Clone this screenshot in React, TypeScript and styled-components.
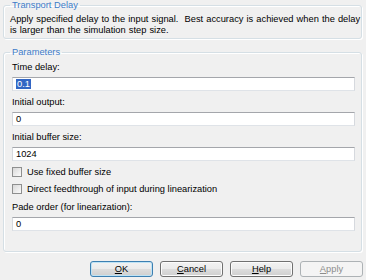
import styled, { createGlobalStyle } from 'styled-components'

const GlobalStyle = createGlobalStyle`
  html, body {
    margin: 0;
    padding: 0;
    background: #f0f0f0;
  }
  body {
    font-family: "Liberation Sans", Arial, sans-serif;
    font-size: 9.3px;
    color: #000;
  }
`

const Dialog = styled.div`
  width: 366px;
  height: 280px;
  display: flex;
  flex-direction: column;
  background: #f0f0f0;
`

const Group = styled.fieldset<{ $top: number; $padBottom: number }>`
  margin: ${(p) => p.$top}px 4px 0 3px;
  padding: 4px 6px ${(p) => p.$padBottom}px 8px;
  border: 1px solid #d5dfe5;
  border-radius: 3px;
  box-shadow: inset 1px 1px 0 #fff, 1px 1px 0 #fff;
  min-width: 0;
`

const Legend = styled.legend`
  padding: 0 2px;
  margin-left: -2px;
  line-height: 10px;
  color: #3d7cc9;
`

const Description = styled.div`
  margin-left: -2px;
  line-height: 11px;
  word-spacing: 0.5px;
  white-space: pre;
`

const Fields = styled.div`
  display: flex;
  flex-direction: column;
  gap: 5px;
`

const Field = styled.div`
  display: flex;
  flex-direction: column;
  gap: 4px;
`

const Label = styled.div`
  height: 12px;
  line-height: 12px;
`

const TextBox = styled.div`
  height: 14px;
  box-sizing: border-box;
  border: 1px solid;
  border-color: #a4a6ab #d6d9de #dfe3e8 #d6d9de;
  background: #fff;
  padding-left: 3px;
  line-height: 12px;
`

const Selected = styled.span`
  background: #3266c4;
  color: #fff;
  padding: 0 1px;
`

const Checks = styled.div`
  display: flex;
  flex-direction: column;
  gap: 3px;
  margin-top: -1px;
`

const CheckRow = styled.label`
  display: flex;
  align-items: center;
  gap: 5px;
  height: 14px;
`

const CheckBox = styled.span`
  width: 10px;
  height: 10px;
  box-sizing: border-box;
  border: 1px solid #8e8f8f;
  background: linear-gradient(135deg, #d8d8d8, #fbfbfb);
`

const ButtonRow = styled.div`
  display: flex;
  justify-content: flex-end;
  gap: 7px;
  padding: 9px 3px 0 0;
`

const Button = styled.button<{ $default?: boolean }>`
  width: 63px;
  height: 16px;
  padding: 0;
  font: inherit;
  line-height: 14px;
  border-radius: 3px;
  border: 1px solid ${(p) => (p.$default ? '#3c7fb1' : '#707070')};
  color: #000;
  background: linear-gradient(#f2f2f2 0%, #ebebeb 50%, #dddddd 51%, #cfcfcf 100%);
  box-shadow: inset 0 0 0 1px ${(p) => (p.$default ? '#bfe3f5' : '#fcfcfc')};

  &:disabled {
    border-color: #adb2b5;
    color: #8d8d8d;
    background: #f4f4f4;
    box-shadow: none;
  }

  u {
    text-decoration: underline;
  }
`

export default function App() {
  return (
    <>
      <GlobalStyle />
      <Dialog>
        <Group $top={0} $padBottom={2}>
          <Legend>Transport Delay</Legend>
          <Description>
            {'Apply specified delay to the input signal.  Best accuracy is achieved when the delay\nis larger than the simulation step size.'}
          </Description>
        </Group>

        <Group $top={8} $padBottom={20}>
          <Legend>Parameters</Legend>
          <Fields>
            <Field>
              <Label>Time delay:</Label>
              <TextBox>
                <Selected>0.1</Selected>
              </TextBox>
            </Field>
            <Field>
              <Label>Initial output:</Label>
              <TextBox>0</TextBox>
            </Field>
            <Field>
              <Label>Initial buffer size:</Label>
              <TextBox>1024</TextBox>
            </Field>
            <Checks>
              <CheckRow>
                <CheckBox />
                Use fixed buffer size
              </CheckRow>
              <CheckRow>
                <CheckBox />
                Direct feedthrough of input during linearization
              </CheckRow>
            </Checks>
            <Field>
              <Label>Pade order (for linearization):</Label>
              <TextBox>0</TextBox>
            </Field>
          </Fields>
        </Group>

        <ButtonRow>
          <Button $default>
            <u>O</u>K
          </Button>
          <Button>
            <u>C</u>ancel
          </Button>
          <Button>
            <u>H</u>elp
          </Button>
          <Button disabled>
            <u>A</u>pply
          </Button>
        </ButtonRow>
      </Dialog>
    </>
  )
}
